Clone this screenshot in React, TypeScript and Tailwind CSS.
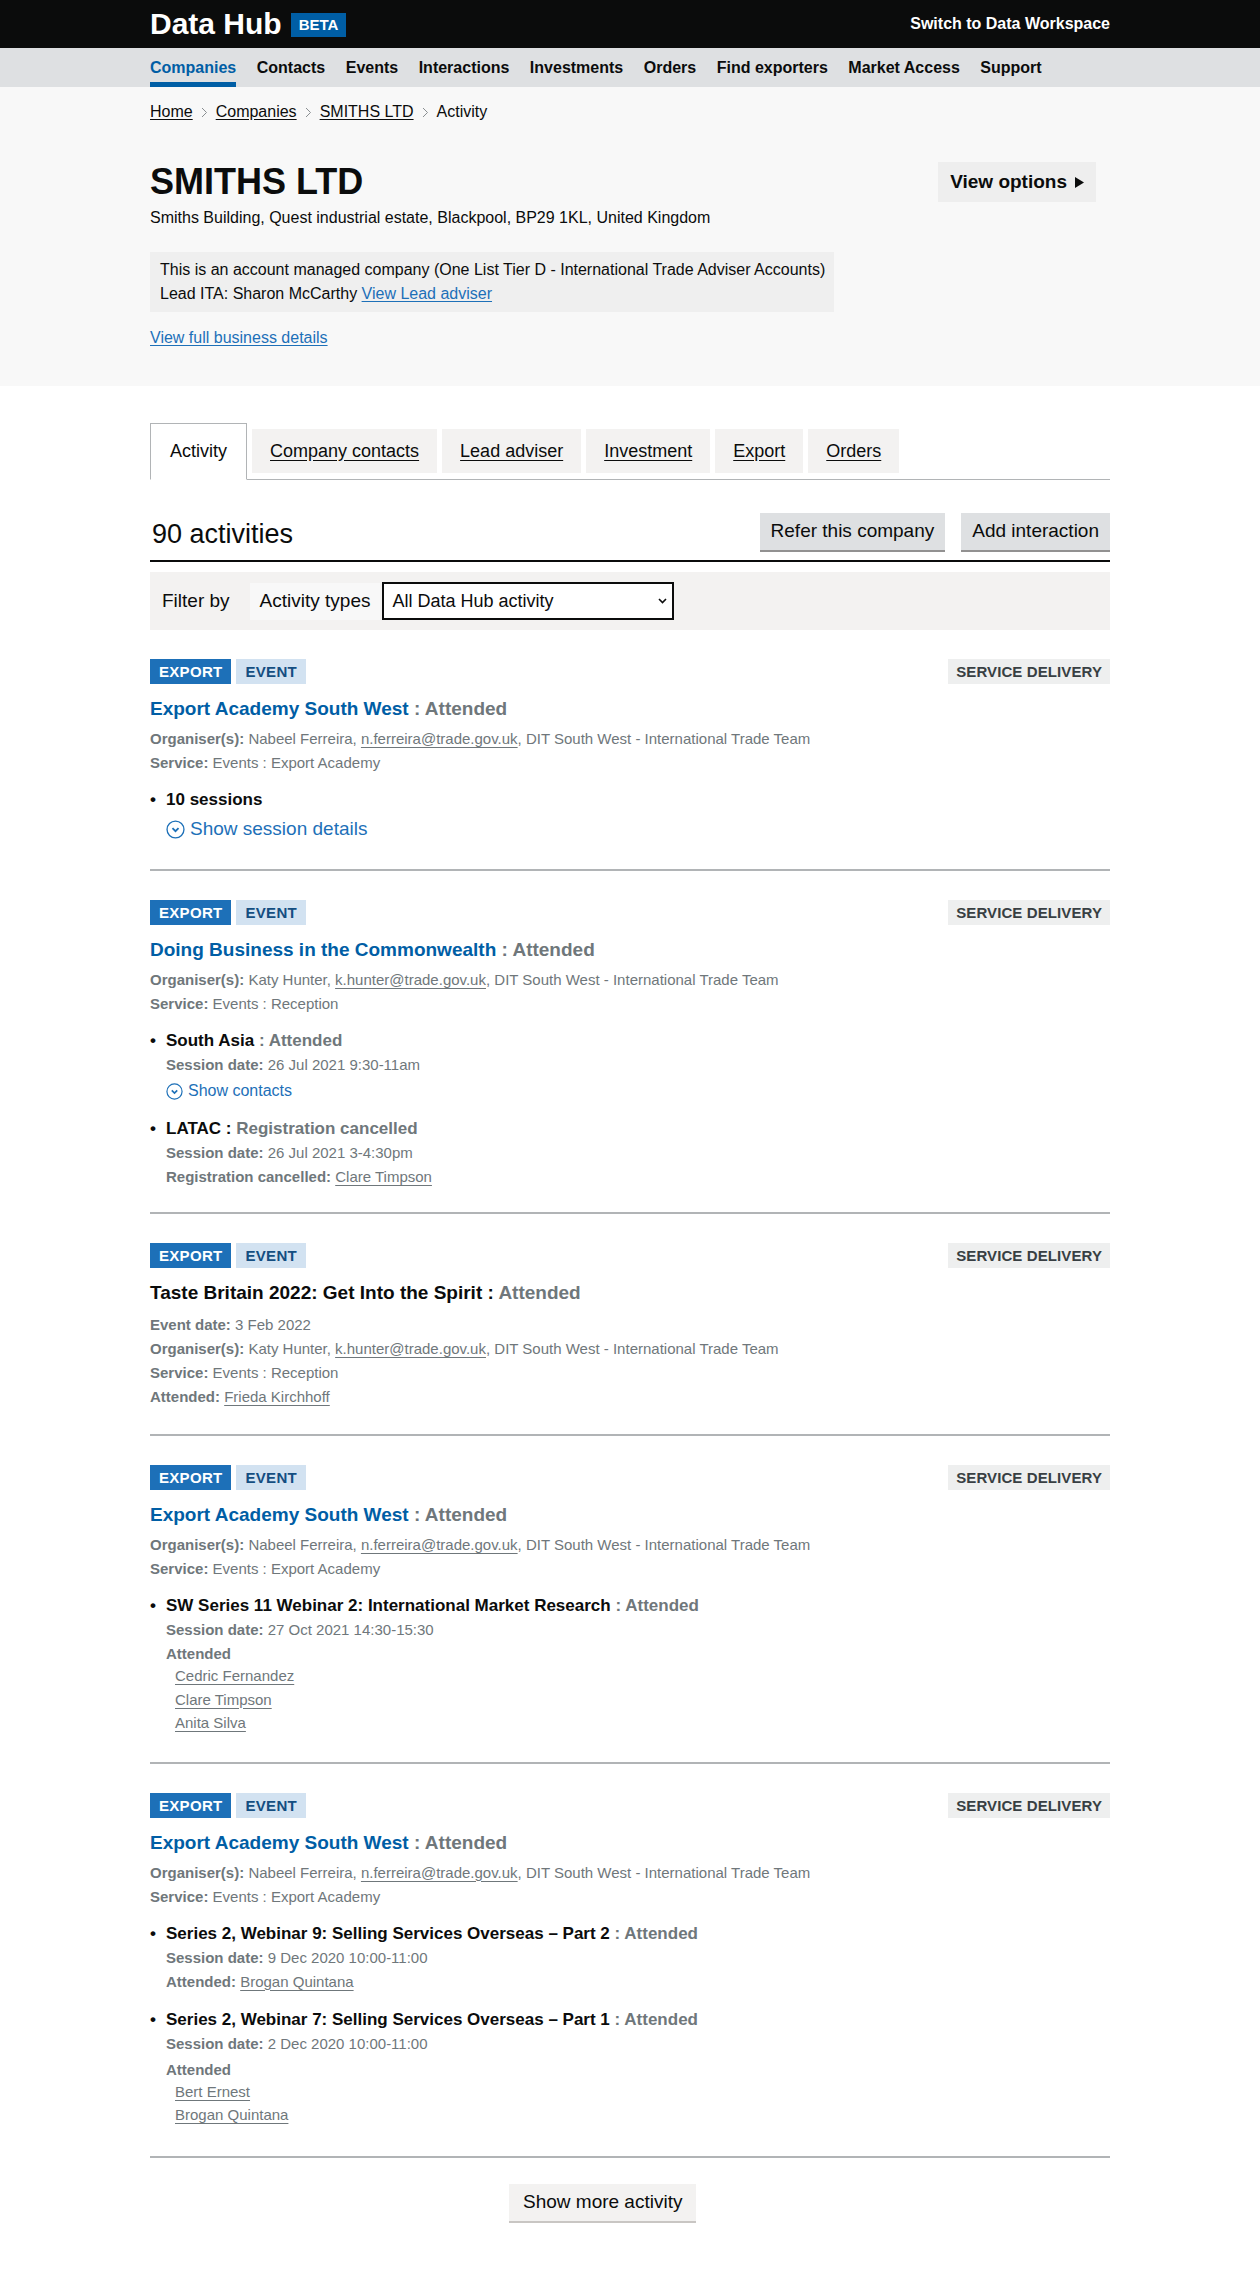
import * as React from "react";

// ─── Shared bits ────────────────────────────────────────────

const FONT = "font-['Liberation_Sans',Arial,Helvetica,sans-serif]";

const navItems = [
  "Companies",
  "Contacts",
  "Events",
  "Interactions",
  "Investments",
  "Orders",
  "Find exporters",
  "Market Access",
  "Support",
];

const tabs = ["Company contacts", "Lead adviser", "Investment", "Export", "Orders"];

function Crumb() {
  return (
    <svg width="7" height="11" viewBox="0 0 7 11" className="mx-[8px] shrink-0" aria-hidden>
      <path d="M1 1l4.5 4.5L1 10" fill="none" stroke="#8a8f92" strokeWidth="1" />
    </svg>
  );
}

function CircleChevron({ size }: { size: number }) {
  return (
    <svg width={size} height={size} viewBox="0 0 20 20" className="shrink-0" aria-hidden>
      <circle cx="10" cy="10" r="8.9" fill="none" stroke="currentColor" strokeWidth="1.4" />
      <path d="M6.8 8.6 10 11.8l3.2-3.2" fill="none" stroke="currentColor" strokeWidth="1.9" />
    </svg>
  );
}

function Tags() {
  return (
    <div className="flex items-start justify-between">
      <div className="flex gap-[5px]">
        <span className="bg-[#1d70b8] px-[9px] text-[15px] font-bold leading-[25px] tracking-[0.3px] text-white">
          EXPORT
        </span>
        <span className="bg-[#d2e2f1] px-[9px] text-[15px] font-bold leading-[25px] tracking-[0.3px] text-[#144e81]">
          EVENT
        </span>
      </div>
      <span className="bg-[#eeefef] px-[8px] text-[15px] font-bold leading-[25px] tracking-[0.1px] text-[#383f43]">
        SERVICE DELIVERY
      </span>
    </div>
  );
}

function Meta({
  label,
  children,
  className = "",
}: {
  label: string;
  children: React.ReactNode;
  className?: string;
}) {
  return (
    <p className={`text-[15px] leading-6 text-[#6f777b] ${className}`}>
      <span className="font-bold">{label}</span> {children}
    </p>
  );
}

function GreyLink({ children }: { children: React.ReactNode }) {
  return <a className="underline decoration-1 underline-offset-[3px]">{children}</a>;
}

function Bullet({
  title,
  status,
  blackColon = false,
  className = "",
}: {
  title: string;
  status: string;
  blackColon?: boolean;
  className?: string;
}) {
  return (
    <div className={`flex text-[17px] font-bold leading-6 ${className}`}>
      <span className="w-4 shrink-0 text-[#0b0c0c]">•</span>
      <span>
        <span className="text-[#0b0c0c]">
          {title}
          {blackColon ? " :" : ""}
        </span>
        <span className="text-[#6f777b]">
          {blackColon ? " " : " : "}
          {status}
        </span>
      </span>
    </div>
  );
}

function Names({ names }: { names: string[] }) {
  return (
    <div className="pl-[9px] text-[15px] leading-[23.5px] text-[#6f777b]">
      {names.map((n) => (
        <div key={n}>
          <GreyLink>{n}</GreyLink>
        </div>
      ))}
    </div>
  );
}

function Title({ name, blue = true }: { name: string; blue?: boolean }) {
  return (
    <h3 className="mt-[12px] text-[19px] font-bold leading-[25px]">
      {blue ? (
        <>
          <span className="text-[#005ea5]">{name}</span>
          <span className="text-[#6f777b]"> : Attended</span>
        </>
      ) : (
        <>
          <span className="text-[#0b0c0c]">{name} :</span>
          <span className="text-[#6f777b]"> Attended</span>
        </>
      )}
    </h3>
  );
}

function Item({ children, pb }: { children: React.ReactNode; pb: string }) {
  return <div className={`mt-[29px] border-b-2 border-[#b1b4b6] ${pb}`}>{children}</div>;
}

const nabeel = (
  <>
    Nabeel Ferreira, <GreyLink>n.ferreira@trade.gov.uk</GreyLink>, DIT South West - International
    Trade Team
  </>
);
const katy = (
  <>
    Katy Hunter, <GreyLink>k.hunter@trade.gov.uk</GreyLink>, DIT South West - International Trade
    Team
  </>
);

// ─── Page ───────────────────────────────────────────────────

export default function App() {
  return (
    <div className={`${FONT} min-h-[2270px] bg-white text-[#0b0c0c]`}>
      {/* Top bar */}
      <header className="h-[48px] bg-[#0b0c0c]">
        <div className="mx-auto flex h-full w-[960px] items-center justify-between">
          <div className="flex items-center">
            <span className="text-[30px] font-bold leading-none text-white">Data Hub</span>
            <span className="ml-[9px] mt-[2px] bg-[#005ea5] px-[8px] text-[15px] font-bold leading-[24px] text-white">
              BETA
            </span>
          </div>
          <a className="text-[16px] font-bold text-white">Switch to Data Workspace</a>
        </div>
      </header>

      {/* Main nav */}
      <nav className="h-[39px] bg-[#dee0e2]">
        <ul className="mx-auto flex h-full w-[960px] gap-[20.5px]">
          {navItems.map((item, i) => (
            <li
              key={item}
              className={`flex h-[39px] items-center border-b-[5px] pt-[6px] text-[16px] font-bold ${
                i === 0 ? "border-[#005ea5] text-[#005ea5]" : "border-transparent text-[#0b0c0c]"
              }`}
            >
              {item}
            </li>
          ))}
        </ul>
      </nav>

      {/* Company header */}
      <section className="bg-[#f8f8f8] pb-[38px]">
        <div className="mx-auto w-[960px]">
          <div className="flex items-center pt-[15px] text-[16px] leading-5">
            <a className="underline underline-offset-2">Home</a>
            <Crumb />
            <a className="underline underline-offset-2">Companies</a>
            <Crumb />
            <a className="underline underline-offset-2">SMITHS LTD</a>
            <Crumb />
            <span>Activity</span>
          </div>

          <div className="mt-[40px] flex items-start justify-between">
            <h1 className="text-[36px] font-bold leading-[40px]">SMITHS LTD</h1>
            <button className="mr-[14px] flex h-[40px] items-center gap-[8px] bg-[#eeeeee] px-[12px] text-[19px] font-bold">
              View options
              <svg width="9" height="11" viewBox="0 0 9 11" aria-hidden>
                <path d="M0 0l9 5.5L0 11z" fill="#0b0c0c" />
              </svg>
            </button>
          </div>
          <p className="mt-[6px] text-[16px] leading-5">
            Smiths Building, Quest industrial estate, Blackpool, BP29 1KL, United Kingdom
          </p>

          <div className="mt-[24px] w-[684px] whitespace-nowrap bg-[#efefef] px-[10px] py-[6px] text-[16px] leading-6">
            <p>This is an account managed company (One List Tier D - International Trade Adviser Accounts)</p>
            <p>
              Lead ITA: Sharon McCarthy{" "}
              <a className="text-[#1d70b8] underline underline-offset-2">View Lead adviser</a>
            </p>
          </div>

          <a className="mt-[16px] block w-fit text-[16px] leading-5 text-[#1d70b8] underline underline-offset-2">
            View full business details
          </a>
        </div>
      </section>

      {/* Activity */}
      <main className="mx-auto w-[960px] pb-[47px]">
        {/* Tabs */}
        <div className="mt-[37px] flex items-end border-b border-[#b1b4b6]">
          <div className="-mb-px flex h-[57px] items-center border border-b-white border-[#b1b4b6] bg-white px-[19px] text-[18px]">
            Activity
          </div>
          {tabs.map((t) => (
            <a
              key={t}
              className="mb-[6px] ml-[5px] flex h-[44px] items-center bg-[#f3f2f1] px-[18px] text-[18px] underline underline-offset-[3px]"
            >
              {t}
            </a>
          ))}
        </div>

        {/* Heading + actions */}
        <div className="mt-[33px] flex h-[37px] items-center justify-between">
          <h2 className="pl-[2px] pt-[6px] text-[27px] leading-none">90 activities</h2>
          <div className="flex gap-[16px]">
            <button className="h-[37px] bg-[#dee0e2] px-[11px] text-[19px] shadow-[0_2px_0_#929191]">
              Refer this company
            </button>
            <button className="h-[37px] bg-[#dee0e2] px-[11px] text-[19px] shadow-[0_2px_0_#929191]">
              Add interaction
            </button>
          </div>
        </div>
        <div className="mt-[10px] h-[2px] bg-[#0b0c0c]" />

        {/* Filter */}
        <div className="mt-[10px] flex h-[58px] items-center bg-[#f3f2f1] px-[12px] text-[19px]">
          <span>Filter by</span>
          <span className="ml-[20px] flex h-[37px] items-center bg-[#f8f8f8] px-[10px]">Activity types</span>
          <div className="ml-[2px] flex h-[38px] w-[292px] items-center justify-between border-2 border-[#0b0c0c] bg-white pl-[8px] pr-[5px] text-[18px]">
            <span>All Data Hub activity</span>
            <svg width="9" height="6" viewBox="0 0 9 6" aria-hidden>
              <path d="M1 1l3.5 3.5L8 1" fill="none" stroke="#0b0c0c" strokeWidth="1.6" />
            </svg>
          </div>
        </div>

        {/* Item 1 */}
        <Item pb="pb-[28px]">
          <Tags />
          <Title name="Export Academy South West" />
          <div className="mt-[6px]">
            <Meta label="Organiser(s):">{nabeel}</Meta>
            <Meta label="Service:">Events : Export Academy</Meta>
          </div>
          <div className="mt-[13px] flex text-[17px] font-bold leading-6">
            <span className="w-4 shrink-0">•</span>
            <span>10 sessions</span>
          </div>
          <div className="mt-[5px] flex items-center gap-[5px] pl-4 text-[19px] leading-6 text-[#1d70b8]">
            <CircleChevron size={19} />
            <span>Show session details</span>
          </div>
        </Item>

        {/* Item 2 */}
        <Item pb="pb-[23px]">
          <Tags />
          <Title name="Doing Business in the Commonwealth" />
          <div className="mt-[6px]">
            <Meta label="Organiser(s):">{katy}</Meta>
            <Meta label="Service:">Events : Reception</Meta>
          </div>
          <Bullet className="mt-[13px]" title="South Asia" status="Attended" />
          <div className="pl-4">
            <Meta label="Session date:">26 Jul 2021 9:30-11am</Meta>
            <div className="mt-[2px] flex items-center gap-[5px] text-[16px] leading-6 text-[#1d70b8]">
              <CircleChevron size={17} />
              <span>Show contacts</span>
            </div>
          </div>
          <Bullet className="mt-[14px]" title="LATAC" status="Registration cancelled" blackColon />
          <div className="pl-4">
            <Meta label="Session date:">26 Jul 2021 3-4:30pm</Meta>
            <Meta label="Registration cancelled:">
              {" "}
              <GreyLink>Clare Timpson</GreyLink>
            </Meta>
          </div>
        </Item>

        {/* Item 3 */}
        <Item pb="pb-[25px]">
          <Tags />
          <Title name="Taste Britain 2022: Get Into the Spirit" blue={false} />
          <div className="mt-[8px]">
            <Meta label="Event date:">3 Feb 2022</Meta>
            <Meta label="Organiser(s):">{katy}</Meta>
            <Meta label="Service:">Events : Reception</Meta>
            <Meta label="Attended:">
              <GreyLink>Frieda Kirchhoff</GreyLink>
            </Meta>
          </div>
        </Item>

        {/* Item 4 */}
        <Item pb="pb-[27px]">
          <Tags />
          <Title name="Export Academy South West" />
          <div className="mt-[6px]">
            <Meta label="Organiser(s):">{nabeel}</Meta>
            <Meta label="Service:">Events : Export Academy</Meta>
          </div>
          <Bullet className="mt-[13px]" title="SW Series 11 Webinar 2: International Market Research" status="Attended" />
          <div className="pl-4">
            <Meta label="Session date:">27 Oct 2021 14:30-15:30</Meta>
            <p className="mt-[2px] text-[15px] font-bold leading-5 text-[#6f777b]">Attended</p>
            <Names names={["Cedric Fernandez", "Clare Timpson", "Anita Silva"]} />
          </div>
        </Item>

        {/* Item 5 */}
        <Item pb="pb-[29px]">
          <Tags />
          <Title name="Export Academy South West" />
          <div className="mt-[6px]">
            <Meta label="Organiser(s):">{nabeel}</Meta>
            <Meta label="Service:">Events : Export Academy</Meta>
          </div>
          <Bullet
            className="mt-[13px]"
            title="Series 2, Webinar 9: Selling Services Overseas – Part 2"
            status="Attended"
          />
          <div className="pl-4">
            <Meta label="Session date:">9 Dec 2020 10:00-11:00</Meta>
            <Meta label="Attended:">
              <GreyLink>Brogan Quintana</GreyLink>
            </Meta>
          </div>
          <Bullet
            className="mt-[14px]"
            title="Series 2, Webinar 7: Selling Services Overseas – Part 1"
            status="Attended"
          />
          <div className="pl-4">
            <Meta label="Session date:">2 Dec 2020 10:00-11:00</Meta>
            <p className="mt-[4px] text-[15px] font-bold leading-5 text-[#6f777b]">Attended</p>
            <Names names={["Bert Ernest", "Brogan Quintana"]} />
          </div>
        </Item>

        {/* Load more */}
        <div className="mt-[26px]">
          <button className="ml-[359px] h-[37px] bg-[#f3f2f1] px-[14px] text-[19px] shadow-[0_2px_0_#c9c6c3]">
            Show more activity
          </button>
        </div>
      </main>
    </div>
  );
}
